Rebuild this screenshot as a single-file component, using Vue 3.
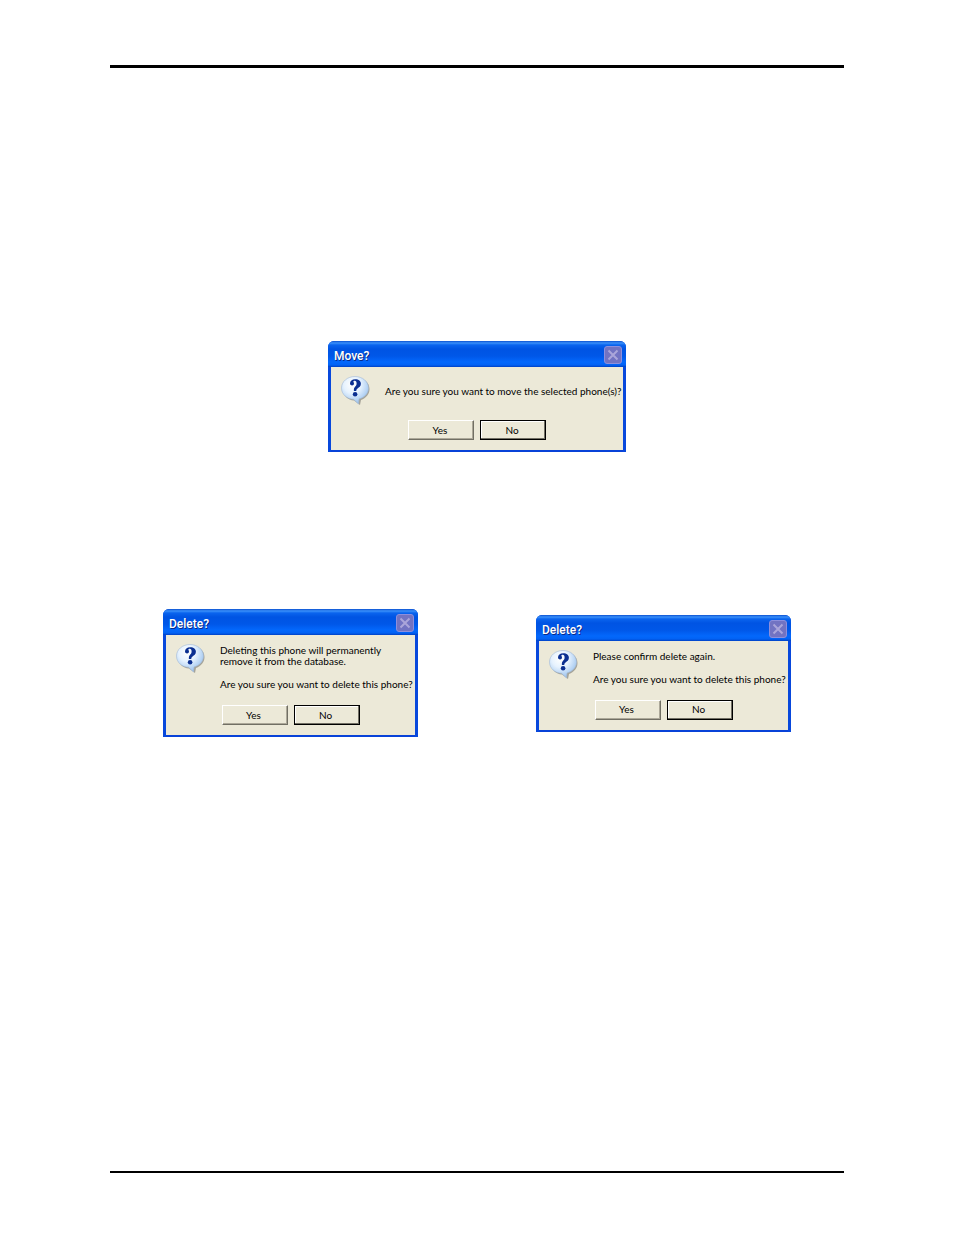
<template>
    <main class="page">
        <hr class="rule rule-top">

        <section v-for="(row, r) in rows" :key="r" class="row" :class="{ pair: row.length > 1 }">
            <div v-for="dialog in row" :key="dialog.id" class="dialog" :class="{ wide: dialog.wide }"
                 role="dialog" :aria-labelledby="dialog.id">
                <header class="titlebar">
                    <h2 :id="dialog.id">{{ dialog.title }}</h2>
                    <button class="close" type="button" aria-label="Close" disabled>
                        <svg viewBox="0 0 16 16">
                            <path d="M3.5 3.5 L12.5 12.5 M12.5 3.5 L3.5 12.5" stroke="#aaa5da" stroke-width="2" />
                        </svg>
                    </button>
                </header>
                <div class="body">
                    <div class="message">
                        <!-- Question balloon -->
                        <svg class="icon" viewBox="0 0 29 29">
                            <defs>
                                <radialGradient :id="dialog.id + '-fill'" cx="0.4" cy="0.3" r="0.7">
                                    <stop offset="0" stop-color="#ffffff" />
                                    <stop offset="0.45" stop-color="#e6f2fe" />
                                    <stop offset="1" stop-color="#9cc3ee" />
                                </radialGradient>
                            </defs>
                            <path d="M15 2 C23 2 28.5 6.5 28.5 13 C28.5 18.5 25 22 20 24 L19 29 L13 24.5 C7 24 2 20 2 13 C2 6.5 7 2 15 2 Z"
                                  fill="#77756d" opacity="0.6" />
                            <path d="M14 0.5 C21.5 0.5 27.5 5.5 27.5 12 C27.5 17.5 23.5 21.5 18 23 L17.5 28 L12.5 23.3 C6 23 0.5 18.5 0.5 12 C0.5 5.5 6.5 0.5 14 0.5 Z"
                                  :fill="`url(#${dialog.id}-fill)`" stroke="#a3bbd6" stroke-width="0.6" />
                            <path d="M9 7.6 C9 4.8 11 3.2 14.2 3.2 C17.8 3.2 19.9 5 19.9 7.8 C19.9 10.4 18 11.4 16.6 12.4 C15.5 13.2 15.3 13.8 15.3 15 L12.9 15 C12.7 12.8 13.2 11.8 14.2 10.6 C15.1 9.6 15.6 8.9 15.6 7.5 C15.6 5.7 15 4.7 13.8 4.7 C12.9 4.7 12.3 5.1 12.4 5.7 C12.5 6.2 13 6.6 13 7.6 C13 8.7 12.2 9.6 11.1 9.6 C9.900 9.6 9 8.7 9 7.6 Z"
                                  fill="#0b2f91" />
                            <circle cx="14.1" cy="18.3" r="2.3" fill="#0b2f91" />
                        </svg>
                        <div class="text">
                            <p v-for="line in dialog.text" :key="line">{{ line }}</p>
                        </div>
                    </div>
                    <div class="buttons">
                        <button class="btn" type="button">Yes</button>
                        <button class="btn default" type="button">No</button>
                    </div>
                </div>
            </div>
        </section>

        <hr class="rule rule-bottom">
    </main>
</template>

<script setup>
const rows = [
    [
        {
            id: 'move',
            title: 'Move?',
            wide: true,
            text: ['Are you sure you want to move the selected phone(s)?']
        }
    ],
    [
        {
            id: 'delete',
            title: 'Delete?',
            text: [
                'Deleting this phone will permanently\nremove it from the database.',
                'Are you sure you want to delete this phone?'
            ]
        },
        {
            id: 'confirm',
            title: 'Delete?',
            text: ['Please confirm delete again.', 'Are you sure you want to delete this phone?']
        }
    ]
]
</script>

<style>
body {
    margin: 0;
    background: #fff;
}
</style>

<style scoped>
.page {
    box-sizing: border-box;
    display: flex;
    flex-direction: column;
    min-height: 100vh;
    padding: 65px 110px 62px;
}

.rule {
    width: 100%;
    margin: 0;
    border: 0;
    background: #000;
}

.rule-top {
    height: 3px;
    margin-bottom: 273px;
}

.rule-bottom {
    height: 2px;
    margin-top: auto;
}

.row {
    display: grid;
    justify-items: center;
    align-items: center;
    margin-bottom: 157px;
}

.pair {
    grid-template-columns: 1fr 1fr;
    gap: 12px;
}

.dialog {
    box-sizing: border-box;
    width: 255px;
    overflow: hidden;
    border-radius: 6px 6px 0 0;
    background: #0848dc;
    font-family: Lato, "Noto Sans", sans-serif;
    font-size: 10px;
    line-height: 11px;
    color: #000;
}

.wide {
    width: 298px;
}

.titlebar {
    display: flex;
    align-items: center;
    justify-content: space-between;
    box-sizing: border-box;
    height: 26px;
    padding: 2px 4px 0 6px;
    background: linear-gradient(#0a50d0 0, #3a90fa 2px, #0a64ee 4px, #0054e3 8px, #0057e8 15px, #0368fc 21px, #0262f4 24px, #0040c4 26px);
}

.titlebar h2 {
    margin: 0;
    padding-top: 2px;
    font-family: Roboto, "Open Sans", sans-serif;
    font-size: 12px;
    line-height: 16px;
    font-weight: 500;
    color: #fff;
    text-shadow: 1px 1px 0 #0a2a88;
}

.close {
    width: 18px;
    height: 18px;
    padding: 0;
    border: 1px solid #8d8fdc;
    border-radius: 3px;
    background: #7273c2;
}

.close svg {
    display: block;
    width: 16px;
    height: 16px;
}

.body {
    margin: 0 3px;
    padding: 9px 10px 10px;
    border-bottom: 2px solid #0842d8;
    background: #ece9d8;
}

.message {
    display: flex;
    gap: 15px;
}

.icon {
    flex: none;
    width: 29px;
    height: 29px;
}

.text {
    display: grid;
    gap: 12px;
    padding-top: 1px;
    align-content: center;
}

.text p {
    margin: 0;
    white-space: pre;
}

.buttons {
    display: flex;
    justify-content: center;
    gap: 6px;
    margin-top: 15px;
}

.btn {
    width: 66px;
    height: 20px;
    padding: 0 2px 0 0;
    border: 1px solid;
    border-color: #fff #716f64 #716f64 #fff;
    background: #ece9d8;
    box-shadow: inset -1px -1px 0 #aca899;
    font: inherit;
    color: inherit;
}

.default {
    border-color: #000;
    box-shadow: inset -1px -1px 0 #716f64, inset 1px 1px 0 #fff;
}
</style>
